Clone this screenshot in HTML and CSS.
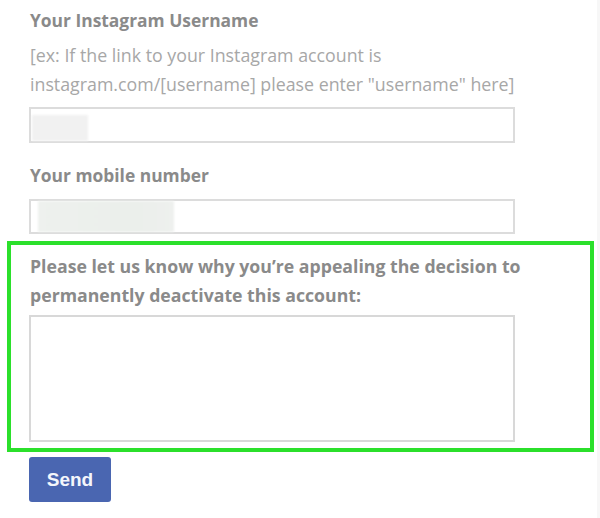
FILE: index.html
```html
<!DOCTYPE html>
<html lang="en">
<head>
<meta charset="utf-8">
<title>Appeal form</title>
<link rel="stylesheet" href="styles.css">
</head>
<body>
<form class="form">
  <div class="field">
    <label class="label">Your Instagram Username</label>
    <p class="hint">[ex: If the link to your Instagram account is instagram.com/[username] please enter "username" here]</p>
    <div class="input input-user"><span class="blur blur-user"></span></div>
  </div>
  <div class="field field-mobile">
    <label class="label">Your mobile number</label>
    <div class="input input-mobile"><span class="blur blur-mobile"></span></div>
  </div>
  <div class="highlight">
    <label class="label label-wide">Please let us know why you’re appealing the decision to permanently deactivate this account:</label>
    <div class="textarea"></div>
  </div>
  <button type="button" class="send">Send</button>
</form>
</body>
</html>
```
FILE: styles.css
```css
html, body {
  margin: 0;
  padding: 0;
  background: #ffffff;
}
body {
  width: 600px;
  height: 518px;
  overflow: hidden;
  font-family: "Open Sans", Lato, sans-serif;
  border-right: 3px solid #f7f7f7;
  box-sizing: border-box;
}
.form {
  display: flex;
  flex-direction: column;
  padding-top: 7px;
}
.field {
  display: flex;
  flex-direction: column;
  padding-left: 29px;
}
.label {
  display: block;
  font-weight: 700;
  font-size: 17.4px;
  line-height: 26px;
  color: #8a8a8a;
  padding-left: 1px;
}
.hint {
  margin: 8px 0 0 0;
  padding-left: 1px;
  width: 505px;
  font-size: 17.8px;
  line-height: 29px;
  color: #a7a7a7;
}
.input {
  box-sizing: border-box;
  width: 486px;
  height: 36px;
  border: 2px solid #dcdcdc;
  background: #fff;
  margin-top: 8px;
}
.input-mobile {
  height: 35px;
  margin-top: 11px;
}
.field-mobile {
  margin-top: 19px;
}
.blur {
  display: block;
  height: 100%;
}
.blur-user {
  width: 56px;
  margin-left: 1px;
  margin-top: 6px;
  height: 26px;
  background: #f1f1f1;
  filter: blur(1px);
}
.blur-mobile {
  width: 136px;
  margin-left: 7px;
  background: linear-gradient(90deg, #eef1ee, #ebefeb 70%, #eef0ee);
  filter: blur(1px);
}
.highlight {
  box-sizing: border-box;
  margin: 7px 0 0 7px;
  width: 587px;
  height: 211px;
  border: 4px solid #2be02b;
  padding: 7px 0 0 18px;
  display: flex;
  flex-direction: column;
}
.label-wide {
  font-size: 17.7px;
  line-height: 29px;
  width: 535px;
}
.textarea {
  box-sizing: border-box;
  margin-top: 5px;
  width: 486px;
  height: 127px;
  border: 2px solid #d8d8d8;
  background: #fff;
}
.send {
  align-self: flex-start;
  margin: 5px 0 0 29px;
  width: 82px;
  height: 45px;
  border: none;
  border-radius: 3px;
  background: #4a66b1;
  color: #f4f6fb;
  font-family: "Liberation Sans", Arial, sans-serif;
  font-weight: 700;
  font-size: 19px;
  padding: 0;
}
```
